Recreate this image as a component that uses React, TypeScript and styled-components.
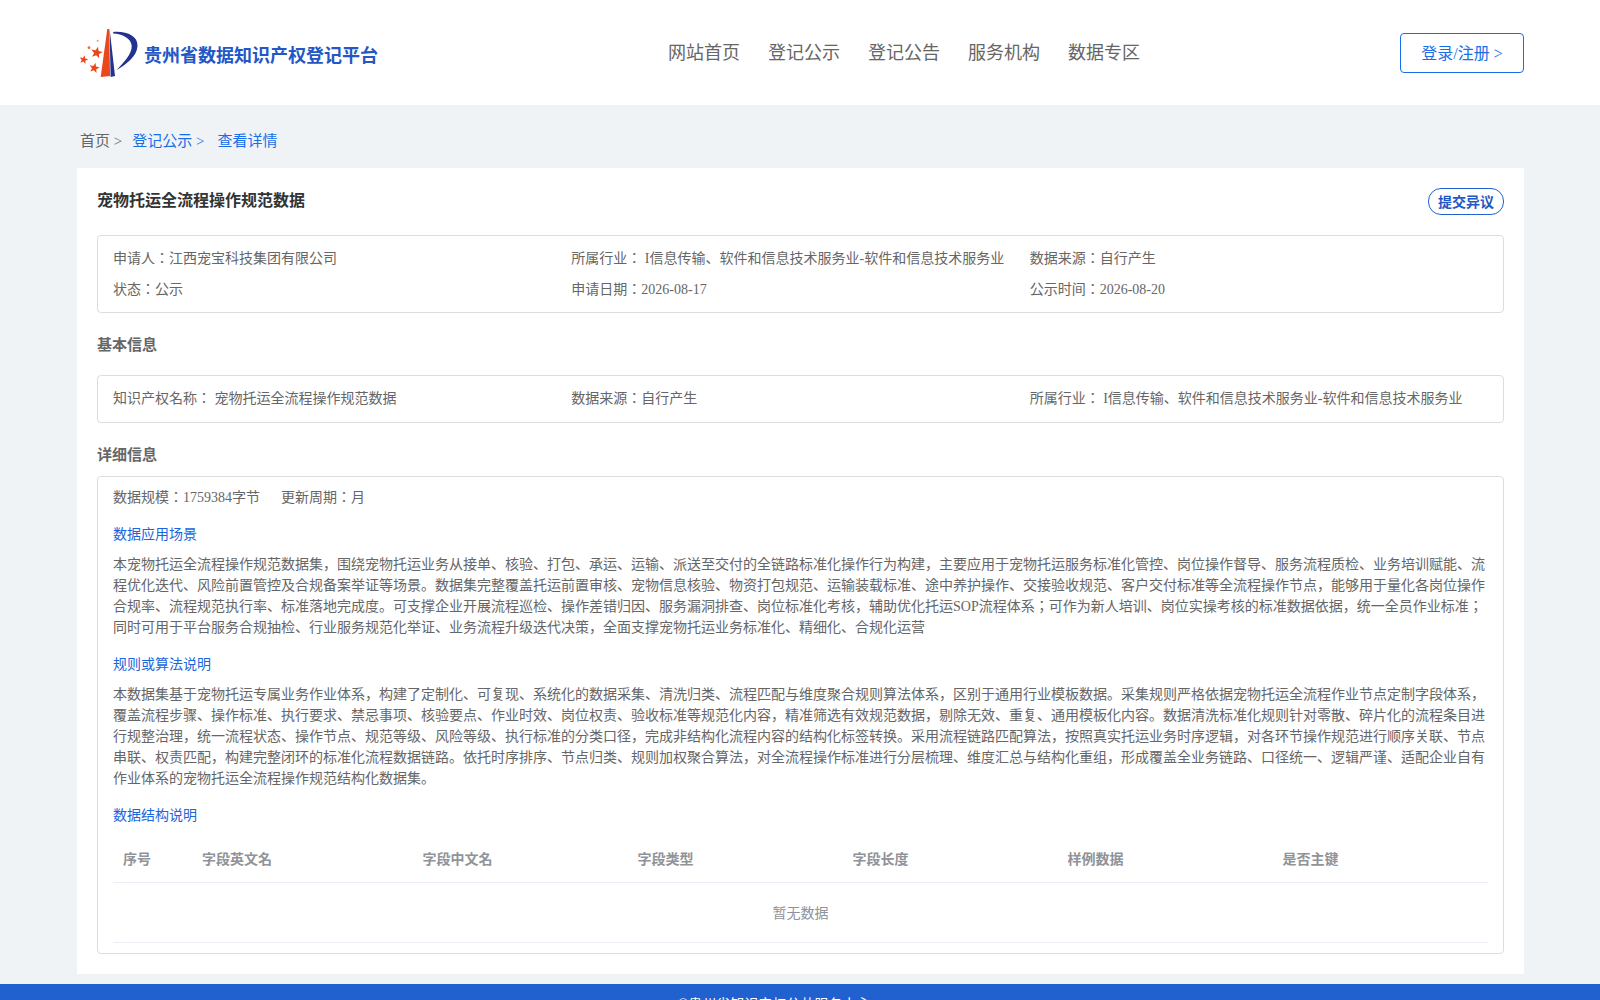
import React from "react";
import styled, { createGlobalStyle } from "styled-components";

const Global = createGlobalStyle`
  html, body { margin: 0; padding: 0; background: #eff3f6; }
  body { font-family: "Liberation Serif", "Noto Sans CJK JP", serif; font-size: 14px; color: #666; }
  * { box-sizing: border-box; }
`;

const Header = styled.header`
  height: 105px;
  background: #fff;
  display: flex;
  align-items: center;
  padding: 0 76px 0 80px;
`;
const Logo = styled.div`
  width: 296px;
  display: flex;
  align-items: center;
`;
const LogoTitle = styled.div`
  font-size: 18px;
  font-weight: 700;
  color: #2257c5;
  white-space: nowrap;
  margin-top: 3px;
`;
const Nav = styled.nav`
  display: flex;
  gap: 28px;
  margin-left: 292px;
`;
const NavItem = styled.a`
  font-size: 18px;
  line-height: 26px;
  color: #666;
`;
const LoginButton = styled.button`
  margin-left: auto;
  width: 124px;
  height: 40px;
  padding: 0 0 2px;
  border: 1px solid #1a6fe8;
  border-radius: 4px;
  background: #fff;
  color: #1a6fe8;
  font: inherit;
  font-size: 16px;
`;
const Main = styled.main`
  padding: 0 76px 10px 77px;
`;
const Crumbs = styled.div`
  height: 63px;
  display: flex;
  align-items: center;
  padding: 5px 0 0 3px;
  font-size: 15px;
`;
const Crumb = styled.span<{ $active?: boolean; $gap?: number }>`
  color: ${(p) => (p.$active ? "#1a6fe8" : "#666")};
  margin-right: ${(p) => p.$gap ?? 0}px;
`;
const Card = styled.section`
  background: #fff;
  padding: 20px 20px 21px;
  height: 806px;
`;
const TitleRow = styled.div`
  display: flex;
  justify-content: space-between;
  align-items: flex-start;
  height: 27px;
`;
const Title = styled.h1`
  margin: 0;
  font-size: 16px;
  line-height: 26px;
  font-weight: 700;
  color: #333;
`;
const Dissent = styled.button`
  width: 76px;
  height: 27px;
  padding: 0 0 2px;
  border: 1px solid #1f62d0;
  border-radius: 13px;
  background: #fff;
  color: #2257c5;
  font: inherit;
  font-size: 14px;
  font-weight: 700;
`;
const Box = styled.div`
  border: 1px solid #ddd;
  border-radius: 4px;
  padding: 0 15px;
`;
const SummaryBox = styled(Box)`
  margin-top: 20px;
  padding-top: 8px;
  padding-bottom: 7px;
`;
const BasicBox = styled(Box)`
  height: 48px;
`;
const Grid = styled.div`
  display: grid;
  grid-template-columns: repeat(3, 1fr);
`;
const Cell = styled.div<{ $h: number }>`
  line-height: ${(p) => p.$h}px;
  height: ${(p) => p.$h}px;
  white-space: nowrap;
`;
const SectionHeading = styled.h2<{ $above: number; $below: number }>`
  margin: ${(p) => p.$above}px 0 ${(p) => p.$below}px;
  font-size: 15px;
  line-height: 21px;
  font-weight: 700;
  color: #666;
`;
const DetailBox = styled(Box)`
  padding-top: 10px;
  padding-bottom: 10px;
`;
const Meta = styled.div`
  display: flex;
  gap: 21px;
  line-height: 21px;
`;
const SubHeading = styled.div`
  margin-top: 16px;
  line-height: 21px;
  color: #1a66dc;
`;
const Paragraph = styled.p`
  margin: 9px 0 0;
  line-height: 21px;
  color: #666;
`;
const Table = styled.table`
  width: 1375px;
  margin-top: 8px;
  border-collapse: collapse;
  table-layout: fixed;
`;
const Th = styled.th<{ $w: number }>`
  width: ${(p) => p.$w}px;
  height: 48px;
  padding: 0 10px;
  text-align: left;
  font-size: 14px;
  font-weight: 700;
  color: #909399;
  border-bottom: 1px solid #ebeef5;
`;
const Empty = styled.td`
  height: 60px;
  text-align: center;
  color: #909399;
  border-bottom: 1px solid #ebeef5;
`;
const Footer = styled.footer`
  background: #2060cf;
  color: #fff;
  text-align: center;
  padding: 10px 52px 10px 0;
  line-height: 21px;
  font-size: 14px;
`;

const star = (cx: number, cy: number, r: number) => {
  const pts: string[] = [];
  for (let i = 0; i < 10; i++) {
    const a = (-90 + i * 36 + 12) * (Math.PI / 180);
    const rad = i % 2 ? r * 0.42 : r;
    pts.push(`${(cx + rad * Math.cos(a)).toFixed(2)},${(cy + rad * Math.sin(a)).toFixed(2)}`);
  }
  return pts.join(" ");
};

const LogoMark = styled.svg`
  display: block;
  flex: none;
  margin-right: 3px;
`;

const columns: [string, number][] = [
  ["序号", 79],
  ["字段英文名", 220.5],
  ["字段中文名", 215],
  ["字段类型", 215],
  ["字段长度", 215],
  ["样例数据", 215],
  ["是否主键", 215.5],
];

export default function App() {
  return (
    <>
      <Global />
      <Header>
        <Logo>
          <LogoMark width="61" height="56" viewBox="80 25 61 56">
            <polygon points="100.7,77 107.3,29 109.3,29 110,76" fill="#e8481c" />
            <polygon points="109.6,29 115,76 110.6,77" fill="#23318f" />
            <path d="M113.2 32 C127 31 138 36 137.5 46 C137 57 125 65 116.7 70 C124 62 132 54 131.7 46 C131.3 38 122 34 113.2 33.5 Z" fill="#23318f" />
            <polygon points={star(96.7, 52.7, 6.2)} fill="#e8481c" />
            <polygon points={star(94.3, 68, 5.4)} fill="#e8481c" />
            <polygon points={star(83.7, 59.7, 4.6)} fill="#e8481c" />
            <circle cx="89" cy="47.7" r="1.4" fill="#ee6a3f" />
            <circle cx="97.7" cy="40.7" r="1" fill="#f0906e" />
          </LogoMark>
          <LogoTitle>贵州省数据知识产权登记平台</LogoTitle>
        </Logo>
        <Nav>
          <NavItem>网站首页</NavItem>
          <NavItem>登记公示</NavItem>
          <NavItem>登记公告</NavItem>
          <NavItem>服务机构</NavItem>
          <NavItem>数据专区</NavItem>
        </Nav>
        <LoginButton>登录/注册 &gt;</LoginButton>
      </Header>
      <Main>
        <Crumbs>
          <Crumb $gap={10}>首页 &gt;</Crumb>
          <Crumb $active $gap={13}>登记公示 &gt;</Crumb>
          <Crumb $active>查看详情</Crumb>
        </Crumbs>
        <Card>
          <TitleRow>
            <Title>宠物托运全流程操作规范数据</Title>
            <Dissent>提交异议</Dissent>
          </TitleRow>
          <SummaryBox>
            <Grid>
              <Cell $h={30.5}>申请人：江西宠宝科技集团有限公司</Cell>
              <Cell $h={30.5}>所属行业： I信息传输、软件和信息技术服务业-软件和信息技术服务业</Cell>
              <Cell $h={30.5}>数据来源：自行产生</Cell>
              <Cell $h={30.5}>状态：公示</Cell>
              <Cell $h={30.5}>申请日期：2026-08-17</Cell>
              <Cell $h={30.5}>公示时间：2026-08-20</Cell>
            </Grid>
          </SummaryBox>
          <SectionHeading $above={22} $below={19}>基本信息</SectionHeading>
          <BasicBox>
            <Grid>
              <Cell $h={46}>知识产权名称： 宠物托运全流程操作规范数据</Cell>
              <Cell $h={46}>数据来源：自行产生</Cell>
              <Cell $h={46}>所属行业： I信息传输、软件和信息技术服务业-软件和信息技术服务业</Cell>
            </Grid>
          </BasicBox>
          <SectionHeading $above={22} $below={10}>详细信息</SectionHeading>
          <DetailBox>
            <Meta>
              <span>数据规模：1759384字节</span>
              <span>更新周期：月</span>
            </Meta>
            <SubHeading>数据应用场景</SubHeading>
            <Paragraph>
              本宠物托运全流程操作规范数据集，围绕宠物托运业务从接单、核验、打包、承运、运输、派送至交付的全链路标准化操作行为构建，主要应用于宠物托运服务标准化管控、岗位操作督导、服务流程质检、业务培训赋能、流程优化迭代、风险前置管控及合规备案举证等场景。数据集完整覆盖托运前置审核、宠物信息核验、物资打包规范、运输装载标准、途中养护操作、交接验收规范、客户交付标准等全流程操作节点，能够用于量化各岗位操作合规率、流程规范执行率、标准落地完成度。可支撑企业开展流程巡检、操作差错归因、服务漏洞排查、岗位标准化考核，辅助优化托运SOP流程体系；可作为新人培训、岗位实操考核的标准数据依据，统一全员作业标准；同时可用于平台服务合规抽检、行业服务规范化举证、业务流程升级迭代决策，全面支撑宠物托运业务标准化、精细化、合规化运营
            </Paragraph>
            <SubHeading>规则或算法说明</SubHeading>
            <Paragraph>
              本数据集基于宠物托运专属业务作业体系，构建了定制化、可复现、系统化的数据采集、清洗归类、流程匹配与维度聚合规则算法体系，区别于通用行业模板数据。采集规则严格依据宠物托运全流程作业节点定制字段体系，覆盖流程步骤、操作标准、执行要求、禁忌事项、核验要点、作业时效、岗位权责、验收标准等规范化内容，精准筛选有效规范数据，剔除无效、重复、通用模板化内容。数据清洗标准化规则针对零散、碎片化的流程条目进行规整治理，统一流程状态、操作节点、规范等级、风险等级、执行标准的分类口径，完成非结构化流程内容的结构化标签转换。采用流程链路匹配算法，按照真实托运业务时序逻辑，对各环节操作规范进行顺序关联、节点串联、权责匹配，构建完整闭环的标准化流程数据链路。依托时序排序、节点归类、规则加权聚合算法，对全流程操作标准进行分层梳理、维度汇总与结构化重组，形成覆盖全业务链路、口径统一、逻辑严谨、适配企业自有作业体系的宠物托运全流程操作规范结构化数据集。
            </Paragraph>
            <SubHeading>数据结构说明</SubHeading>
            <Table>
              <thead>
                <tr>
                  {columns.map(([label, w]) => (
                    <Th key={label} $w={w}>{label}</Th>
                  ))}
                </tr>
              </thead>
              <tbody>
                <tr>
                  <Empty colSpan={7}>暂无数据</Empty>
                </tr>
              </tbody>
            </Table>
          </DetailBox>
        </Card>
      </Main>
      <Footer>©贵州省知识产权公共服务中心</Footer>
    </>
  );
}
